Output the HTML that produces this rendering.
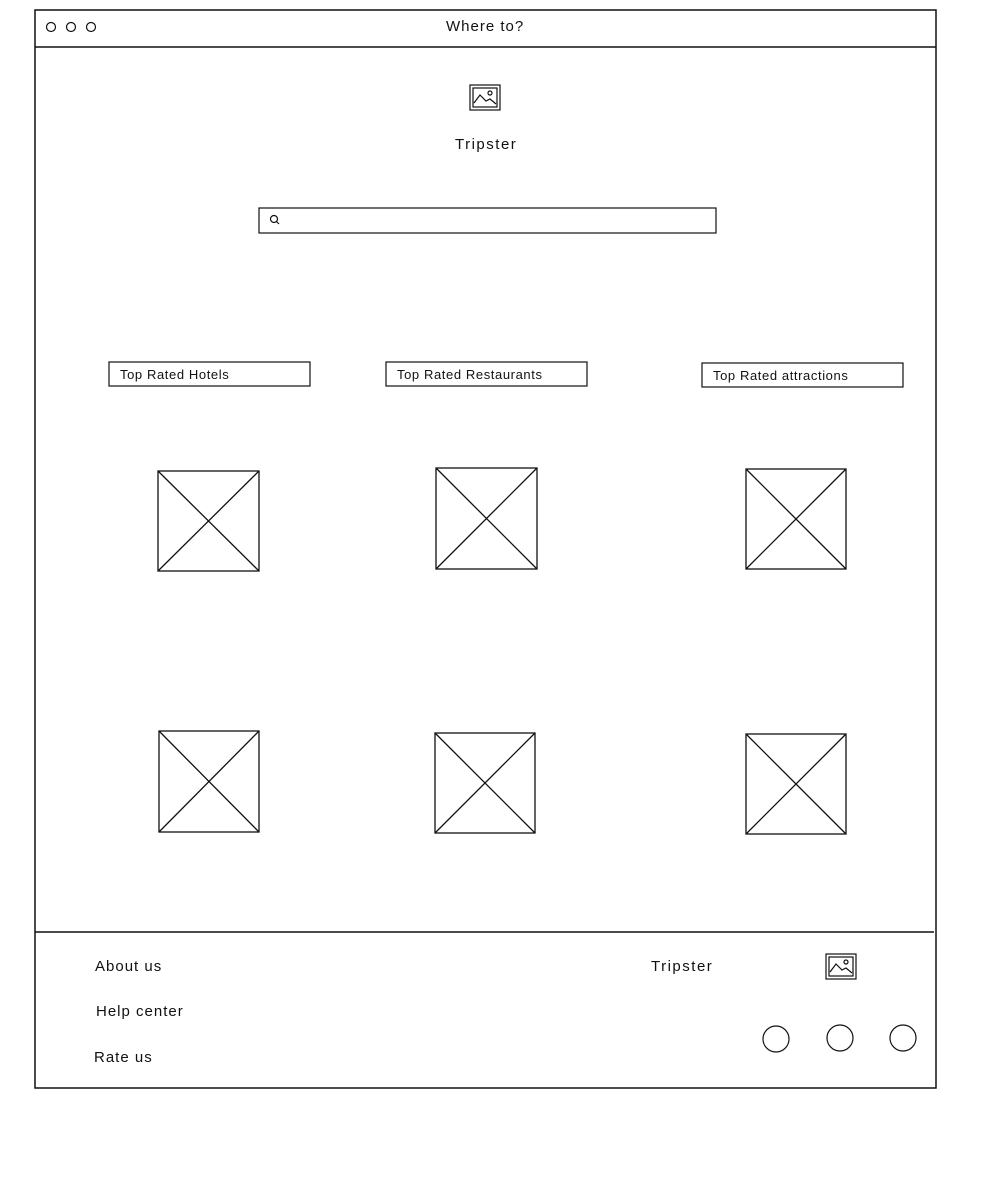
<!DOCTYPE html>
<html><head><meta charset="utf-8"><style>
html,body{margin:0;padding:0;background:#fff;}
body{width:1001px;height:1189px;position:relative;font-family:"Liberation Sans",sans-serif;color:#111;}
.a{position:absolute;}
.t{position:absolute;white-space:nowrap;letter-spacing:1px;}
</style></head><body>
<svg class="a" style="left:0;top:0" width="1001" height="1189" fill="none" stroke="#111" stroke-width="1.5">
<rect x="35" y="10" width="901" height="1078"/>
<line x1="35" y1="47" x2="936" y2="47"/>
<line x1="35" y1="932" x2="934" y2="932"/>
<g stroke-width="1.2">
<circle cx="51" cy="27" r="4.5"/><circle cx="71" cy="27" r="4.5"/><circle cx="91" cy="27" r="4.5"/>
<rect x="470" y="85" width="30" height="25"/><rect x="473" y="88" width="24" height="19"/>
<path d="M474 103 L480 95 L486 101 L490 99 L496 104"/><circle cx="490" cy="93" r="2"/>
<rect x="259" y="208" width="457" height="25"/>
<circle cx="274" cy="219" r="3.5"/><line x1="276.5" y1="221.5" x2="279" y2="224"/>
<rect x="109" y="362" width="201" height="24"/>
<rect x="386" y="362" width="201" height="24"/>
<rect x="702" y="363" width="201" height="24"/>
<rect x="826" y="954" width="30" height="25"/><rect x="829" y="957" width="24" height="19"/>
<path d="M830 972 L836 964 L842 970 L846 968 L852 973"/><circle cx="846" cy="962" r="2"/>
<circle cx="776" cy="1039" r="13"/><circle cx="840" cy="1038" r="13"/><circle cx="903" cy="1038" r="13"/>
</g>
<g stroke-width="1.3">
<rect x="158" y="471" width="101" height="100"/><path d="M158 471 L259 571 M259 471 L158 571"/>
<rect x="436" y="468" width="101" height="101"/><path d="M436 468 L537 569 M537 468 L436 569"/>
<rect x="746" y="469" width="100" height="100"/><path d="M746 469 L846 569 M846 469 L746 569"/>
<rect x="159" y="731" width="100" height="101"/><path d="M159 731 L259 832 M259 731 L159 832"/>
<rect x="435" y="733" width="100" height="100"/><path d="M435 733 L535 833 M535 733 L435 833"/>
<rect x="746" y="734" width="100" height="100"/><path d="M746 734 L846 834 M846 734 L746 834"/>
</g>
</svg>
<div class="t" style="left:446px;top:18px;font-size:15px;">Where to?</div>
<div class="t" style="left:455px;top:136px;font-size:15px;letter-spacing:1.5px;">Tripster</div>
<div class="t" style="left:120px;top:367px;font-size:13px;letter-spacing:0.6px;">Top Rated Hotels</div>
<div class="t" style="left:397px;top:367px;font-size:13px;letter-spacing:0.6px;">Top Rated Restaurants</div>
<div class="t" style="left:713px;top:368px;font-size:13px;letter-spacing:0.6px;">Top Rated attractions</div>
<div class="t" style="left:95px;top:958px;font-size:15px;">About us</div>
<div class="t" style="left:96px;top:1003px;font-size:15px;">Help center</div>
<div class="t" style="left:94px;top:1049px;font-size:15px;">Rate us</div>
<div class="t" style="left:651px;top:958px;font-size:15px;letter-spacing:1.5px;">Tripster</div>
</body></html>
